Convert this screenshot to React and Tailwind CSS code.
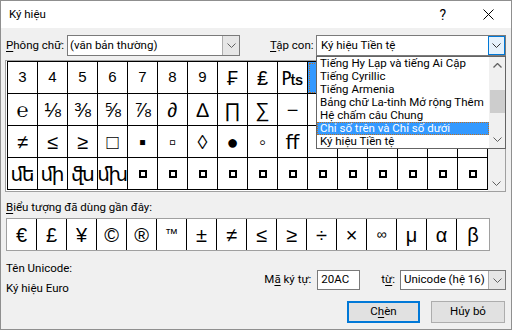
import React from "react";

const FONT = "font-['Roboto',sans-serif]";
const SYM = "font-['Liberation_Sans','DejaVu_Sans',sans-serif]";

function Chevron({ className = "", color = "#606060" }) {
  return (
    <svg width="9" height="5" viewBox="0 0 9 5" className={className}>
      <polyline points="0.5,0.5 4.5,4.5 8.5,0.5" fill="none" stroke={color} strokeWidth="1" />
    </svg>
  );
}
function ChevronUp({ color = "#606060" }) {
  return (
    <svg width="9" height="5" viewBox="0 0 9 5">
      <polyline points="0.5,4.5 4.5,0.5 8.5,4.5" fill="none" stroke={color} strokeWidth="1.3" />
    </svg>
  );
}

function Box() {
  return <div className="w-[8px] h-[8px] border-2 border-black" />;
}

// "" = cell hidden behind the open dropdown list
const rows = [
  ["3", "4", "5", "6", "7", "8", "9", "₣", "₤", "₧", "", "", "", "", "", ""],
  ["℮", "⅛", "⅜", "⅝", "⅞", "∂", "∆", "∏", "∑", "−", "", "", "", "", "", ""],
  ["≠", "≤", "≥", "□", "▪", "▫", "◊", "●", "◦", "ﬀ", "", "", "", "", "", ""],
  ["ﬔ", "ﬕ", "ﬖ", "ﬗ", null, null, null, null, null, null, null, null, null, null, null, null],
];

const recent = ["€", "£", "¥", "©", "®", "™", "±", "≠", "≤", "≥", "÷", "×", "∞", "μ", "α", "β"];

const subsets = [
  "Tiếng Hy Lạp và tiếng Ai Cập",
  "Tiếng Cyrillic",
  "Tiếng Armenia",
  "Bảng chữ La-tinh Mở rộng Thêm",
  "Hệ chấm câu Chung",
  "Chỉ số trên và Chỉ số dưới",
  "Ký hiệu Tiền tệ",
];

export default function App() {
  return (
    <div className={`w-[512px] h-[330px] border border-[#8f8f8f] bg-[#f0f0f0] flex flex-col text-[11.5px] text-black overflow-hidden whitespace-nowrap ${FONT}`}>
      {/* title bar */}
      <div className="h-[27px] bg-white flex items-center pl-[8px] shrink-0">
        <span>Ký hiệu</span>
        <div className="ml-auto flex items-center">
          <span className="text-[14px] mr-[37px] mt-[1px]">?</span>
          <svg width="11" height="11" viewBox="0 0 11 11" className="mr-[17px]">
            <line x1="0.5" y1="0.5" x2="10.5" y2="10.5" stroke="#000" strokeWidth="1" />
            <line x1="10.5" y1="0.5" x2="0.5" y2="10.5" stroke="#000" strokeWidth="1" />
          </svg>
        </div>
      </div>

      {/* body */}
      <div className="flex-1 flex flex-col pl-[4px] pr-[5px] pt-[7px]">
        {/* font + subset row */}
        <div className="flex items-center h-[21px]">
          <div className="w-[62px] pl-[1px]"><span className="underline underline-offset-2">P</span>hông chữ:</div>
          <div className="w-[173px] h-[21px] bg-white border border-[#7a7a7a] flex items-center">
            <span className="pl-[2px] flex-1">(văn bản thường)</span>
            <div className="w-[17px] h-full bg-[#e6e6e6] border-l border-[#adadad] flex items-center justify-center">
              <Chevron />
            </div>
          </div>
          <div className="ml-[30px] w-[46px]"><span className="underline underline-offset-2">T</span>ập con:</div>
          <div className="relative w-[190px] h-[21px] bg-white border border-[#7a7a7a] flex items-center">
            <span className="pl-[4px] flex-1">Ký hiệu Tiền tệ</span>
            <div className="w-[17px] h-full bg-[#e5f1fb] border border-[#0078d7] flex items-center justify-center">
              <Chevron color="#333" />
            </div>
            {/* dropdown list */}
            <div className="absolute left-[-1px] top-[20px] w-[190px] h-[93px] bg-white border border-[#646464] z-10 flex">
              <div className="flex-1 flex flex-col">
                {subsets.map((s, i) => (
                  <div
                    key={s}
                    className={
                      "h-[13px] leading-[13px] pl-[3px] whitespace-nowrap " +
                      (i === 5 ? "bg-[#3399ff] text-white outline outline-1 outline-dotted outline-[#c07020] -outline-offset-1" : "")
                    }
                  >
                    {s}
                  </div>
                ))}
              </div>
              <div className="w-[16px] bg-[#f0f0f0] flex flex-col items-center">
                <div className="h-[17px] flex items-center justify-center"><ChevronUp /></div>
                <div className="h-[16px]" />
                <div className="w-[15px] h-[23px] bg-[#cdcdcd]" />
                <div className="flex-1" />
                <div className="h-[17px] flex items-center justify-center"><Chevron color="#606060" /></div>
              </div>
            </div>
          </div>
        </div>

        {/* symbol grid */}
        <div className="mt-[4px] h-[132px] border border-[#a0a0a0] bg-white flex pl-[1px]">
          <div className="flex flex-col">
            <div className={`grid grid-cols-[repeat(16,30px)] border-l border-t border-black ${SYM}`}>
              {rows.map((r, ri) =>
                r.map((c, ci) => {
                  const sel = ri === 0 && ci === 10;
                  return (
                    <div
                      key={ri + "-" + ci}
                      className={
                        "h-[32px] border-r border-b border-black flex items-center justify-center overflow-hidden " +
                        (sel ? "bg-[#3399ff] outline outline-1 outline-dotted outline-[#c07020] -outline-offset-2 text-white " : "") +
                        (ri === 0 && ci < 7 ? "text-[15px]" : "text-[20px]")
                      }
                    >
                      {c === null ? <Box /> : c}
                    </div>
                  );
                })
              )}
            </div>
          </div>
          <div className="w-[17px] bg-[#f0f0f0] flex flex-col items-center justify-end pb-[5px]">
            <Chevron />
          </div>
        </div>

        {/* recent */}
        <div className="h-[26px] flex items-center pl-[1px] pt-[6px]">
          <span><span className="underline underline-offset-2">B</span>iểu tượng đã dùng gần đây:</span>
        </div>
        <div className={`ml-[1px] w-[484px] h-[33px] border border-[#a0a0a0] bg-white flex ${SYM}`}>
          {recent.map((c, i) => (
            <div
              key={i}
              className={
                "h-full flex items-center justify-center " +
                (i < 15 ? "w-[30px] border-r border-black " : "flex-1 ") +
                (c === "™" ? "text-[13px] items-start pt-[5px] " : c === "∞" ? "text-[14px] " : "text-[20px] ")
              }
            >
              {c}
            </div>
          ))}
        </div>

        {/* bottom */}
        <div className="flex-1 flex">
          <div className="flex flex-col pl-[1px] pt-[9px] leading-[16px]">
            <span>Tên Unicode:</span>
            <span className="mt-[4px]">Ký hiệu Euro</span>
          </div>
          <div className="ml-auto flex flex-col items-end pt-[19px]">
            <div className="flex items-center h-[20px]">
              <span className="mr-[6px]">M<span className="underline underline-offset-2">ã</span> ký tự:</span>
              <div className="w-[43px] h-[20px] bg-white border border-[#7a7a7a] flex items-center pl-[3px]">20AC</div>
              <span className="ml-[21px] mr-[5px]">t<span className="underline underline-offset-2">ừ</span>:</span>
              <div className="w-[106px] h-[20px] bg-white border border-[#7a7a7a] flex items-center">
                <span className="flex-1 pl-[3px] whitespace-nowrap">Unicode (hệ 16)</span>
                <div className="w-[17px] h-full bg-[#e6e6e6] border-l border-[#adadad] flex items-center justify-center">
                  <Chevron />
                </div>
              </div>
            </div>
            <div className="flex mt-[11px] mr-[1px]">
              <div className="w-[73px] h-[22px] bg-[#e1e1e1] border-2 border-[#0078d7] flex items-center justify-center">
                C<span className="underline underline-offset-2">h</span>èn
              </div>
              <div className="ml-[11px] w-[74px] h-[22px] bg-[#e1e1e1] border border-[#adadad] flex items-center justify-center">
                Hủy bỏ
              </div>
            </div>
          </div>
        </div>
      </div>
    </div>
  );
}
